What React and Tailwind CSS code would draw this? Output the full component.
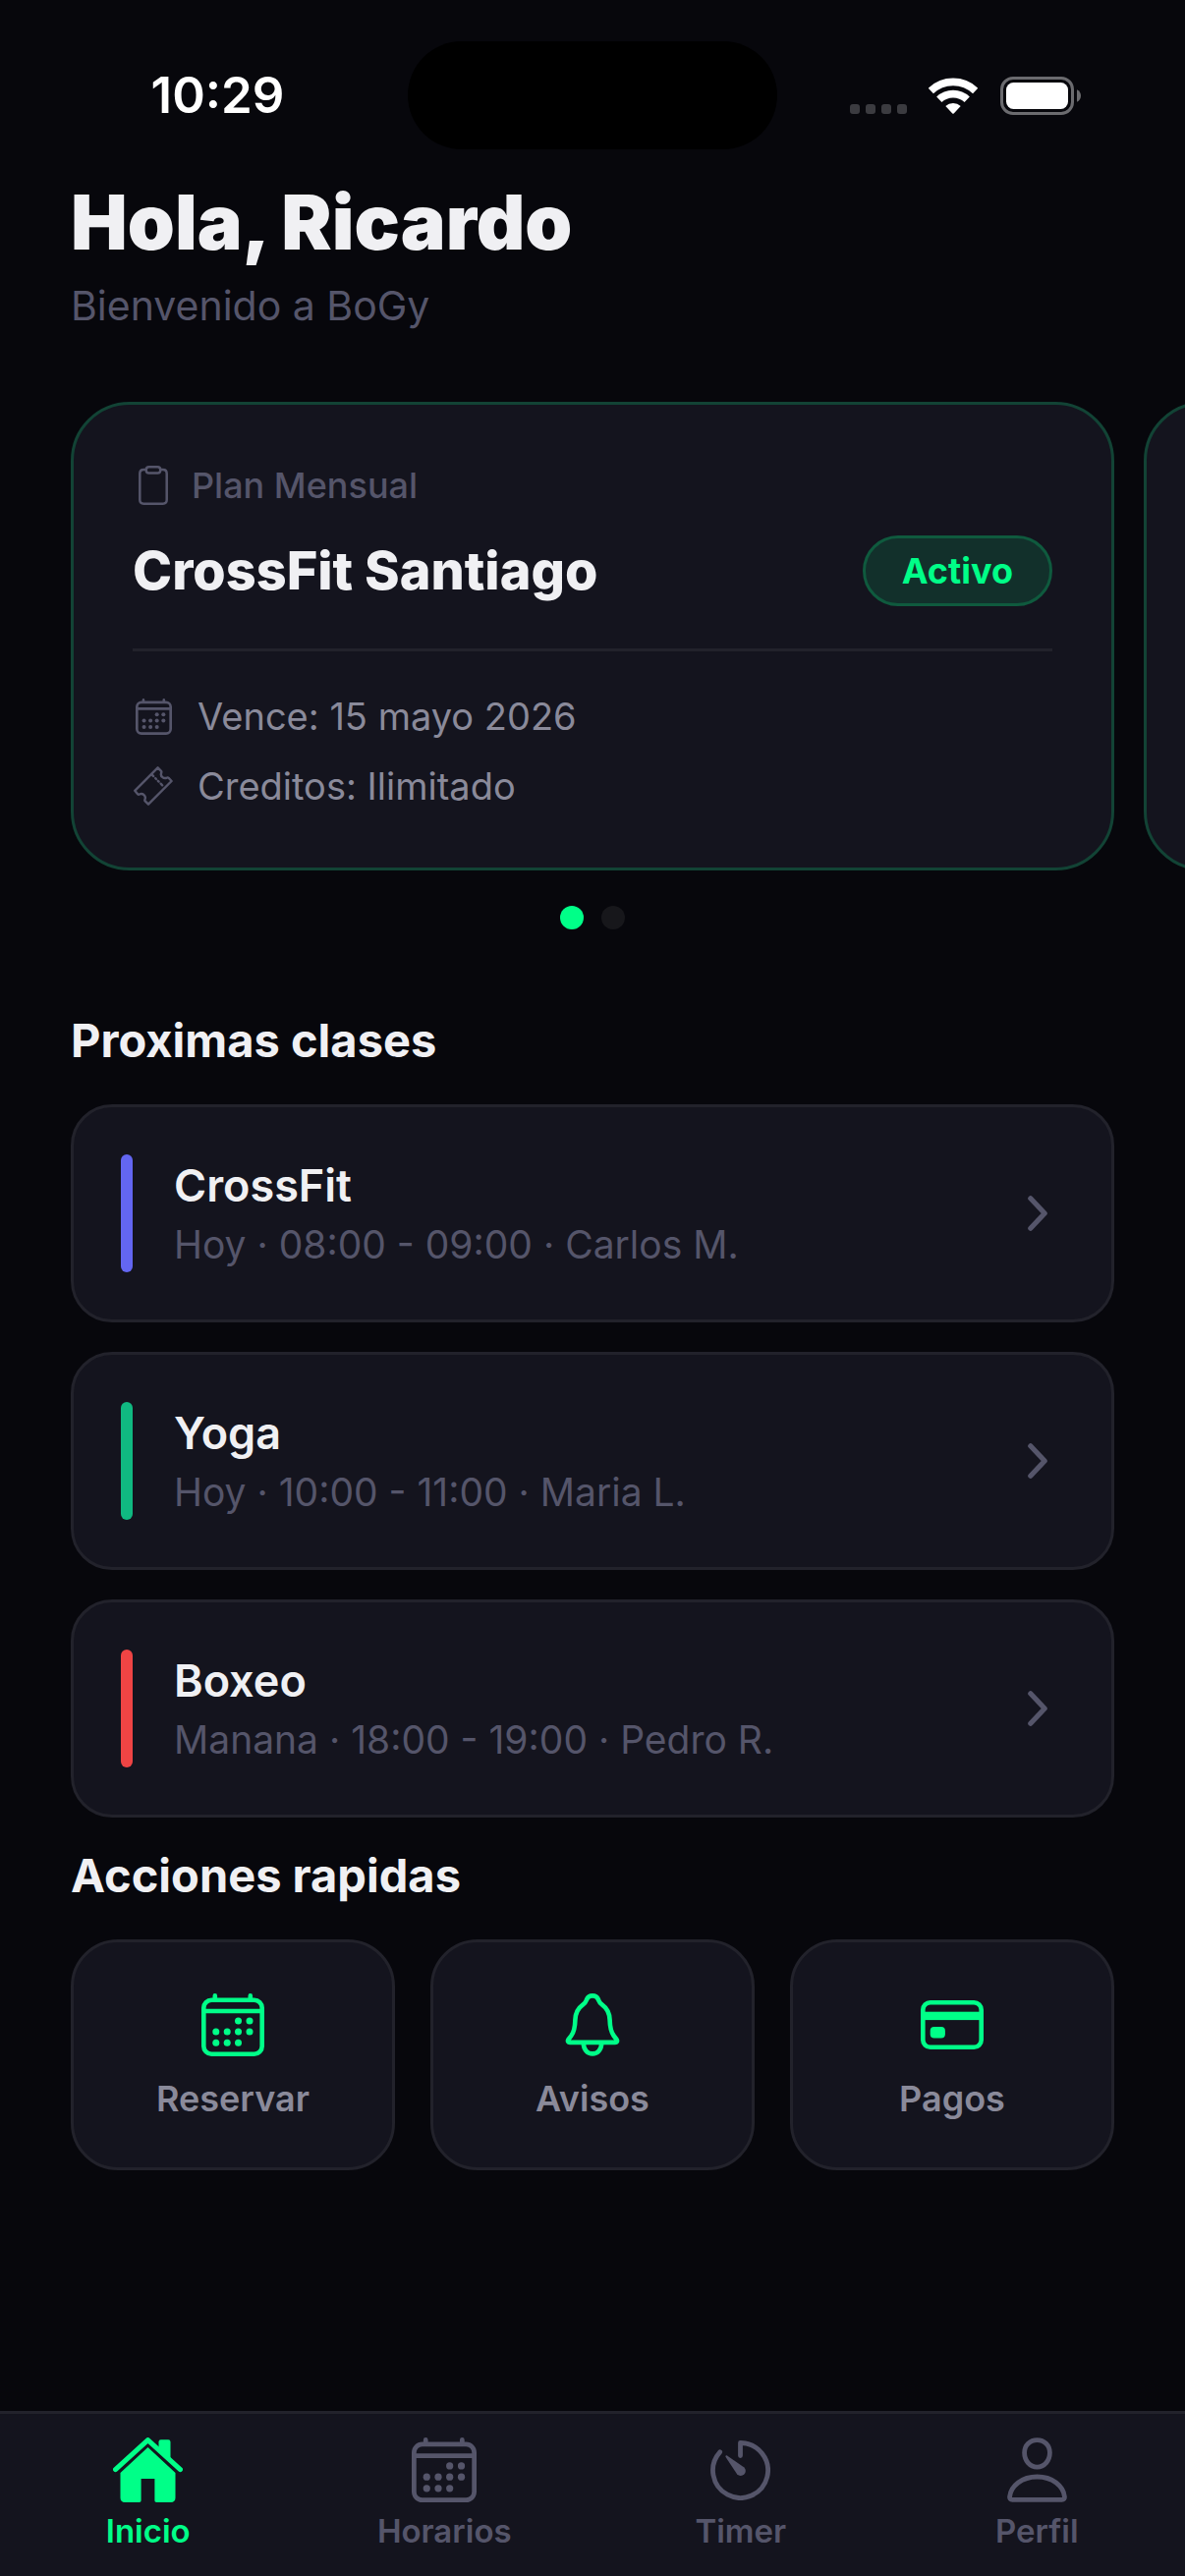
const CLASSES = [
  { name: 'CrossFit', detail: 'Hoy · 08:00 - 09:00 · Carlos M.', bar: 'bg-[#6366f1]' },
  { name: 'Yoga', detail: 'Hoy · 10:00 - 11:00 · Maria L.', bar: 'bg-[#10b981]' },
  { name: 'Boxeo', detail: 'Manana · 18:00 - 19:00 · Pedro R.', bar: 'bg-[#ef4444]' },
]

const ACTIONS = [
  { label: 'Reservar', Icon: CalendarIcon, size: 'size-16' },
  { label: 'Avisos', Icon: BellIcon, size: 'h-16 w-14' },
  { label: 'Pagos', Icon: CardIcon, size: 'h-[50px] w-16' },
]

const TABS = [
  { label: 'Inicio', Icon: HomeIcon, size: 'h-[66px] w-[71px]', active: true },
  { label: 'Horarios', Icon: CalendarIcon, size: 'size-[66px]' },
  { label: 'Timer', Icon: TimerIcon, size: 'size-[61px]' },
  { label: 'Perfil', Icon: PersonIcon, size: 'h-[66px] w-[61px]' },
]

function CalendarIcon({ className }) {
  return (
    <svg viewBox="0 0 64 64" fill="none" stroke="currentColor" strokeWidth="4.6" className={className} aria-hidden="true">
      <rect x="2.3" y="6.7" width="59.4" height="55" rx="8" />
      <path d="M2.3 18h59.4" />
      <path d="M13.8 2.4v4M49.8 2.4v4" strokeLinecap="round" />
      <g fill="currentColor" stroke="none">
        <circle cx="37.5" cy="28" r="3.5" />
        <circle cx="49" cy="28" r="3.5" />
        <circle cx="14.8" cy="39" r="3.5" />
        <circle cx="26.2" cy="39" r="3.5" />
        <circle cx="37.5" cy="39" r="3.5" />
        <circle cx="49" cy="39" r="3.5" />
        <circle cx="14.8" cy="50.2" r="3.5" />
        <circle cx="26.2" cy="50.2" r="3.5" />
        <circle cx="37.5" cy="50.2" r="3.5" />
      </g>
    </svg>
  )
}

function BellIcon({ className }) {
  return (
    <svg viewBox="0 0 56 64" fill="none" stroke="currentColor" strokeWidth="4.6" strokeLinejoin="round" className={className} aria-hidden="true">
      <path d="M28 2.4c-3.6 0-5.6 2.4-6.4 5-.6 2-1.8 3-3.8 4.4C12.4 15.6 10.6 20.6 10.4 27c-.2 8-.9 11.8-4 16l-3 4c-1 1.5-.2 2.9 1.6 2.9h46c1.8 0 2.6-1.4 1.6-2.9l-3-4c-3.1-4.2-3.8-8-4-16-.2-6.4-2-11.4-7.4-15.2-2-1.4-3.2-2.4-3.8-4.4-.8-2.6-2.8-5-6.4-5z" />
      <path d="M18.8 50.5c0 6.6 4 10.9 9.2 10.9s9.2-4.3 9.2-10.9" />
    </svg>
  )
}

function CardIcon({ className }) {
  return (
    <svg viewBox="0 0 64 50" fill="none" className={className} aria-hidden="true">
      <rect x="2.3" y="2.3" width="59.4" height="45.4" rx="7.5" stroke="currentColor" strokeWidth="4.6" />
      <rect x="2" y="11.7" width="60" height="8.4" fill="currentColor" />
      <rect x="9.7" y="27" width="15.2" height="11.5" rx="4" fill="currentColor" />
    </svg>
  )
}

function HomeIcon({ className }) {
  return (
    <svg viewBox="0 0 71 66" fill="currentColor" className={className} aria-hidden="true">
      <path d="M2.5 32.6 35.5 2.6l33 30" fill="none" stroke="currentColor" strokeWidth="5" strokeLinecap="round" strokeLinejoin="round" />
      <path d="M46.5 11.5v-7a2.2 2.2 0 0 1 2.2-2.2h7.6a2.2 2.2 0 0 1 2.2 2.2V23z" />
      <path d="M35.5 10 63.5 36v25.5c0 2.8-1.8 4.5-4.5 4.5H44.2a1.8 1.8 0 0 1-1.8-1.8V42H28.6v22.2a1.8 1.8 0 0 1-1.8 1.8H12c-2.7 0-4.5-1.7-4.5-4.5V36z" />
    </svg>
  )
}

function TimerIcon({ className }) {
  return (
    <svg viewBox="0 0 61 61" fill="none" className={className} aria-hidden="true">
      <path d="M30.5 15.5V2.5A28 28 0 1 1 9.7 11.8" stroke="currentColor" strokeWidth="4.8" strokeLinecap="round" strokeLinejoin="round" />
      <path d="M17 15.6 34.4 27.5a5 5 0 1 1-7.2 7L15.6 17c-.7-1.1.3-2.1 1.4-1.4z" fill="currentColor" />
    </svg>
  )
}

function PersonIcon({ className }) {
  return (
    <svg viewBox="0 0 61 66" fill="none" stroke="currentColor" strokeWidth="4.8" className={className} aria-hidden="true">
      <path d="M30.5 2.6c-7.4 0-12.9 5.5-12.9 12.9 0 8.2 5.6 14.6 12.9 14.6s12.9-6.4 12.9-14.6c0-7.4-5.5-12.9-12.9-12.9z" />
      <path d="M5.3 63.4h50.4c2 0 2.9-1.3 2.7-3.2C57.2 49.3 46 40 30.5 40S3.8 49.3 2.6 60.2c-.2 1.9.7 3.2 2.7 3.2z" />
    </svg>
  )
}

function ClipboardIcon({ className }) {
  return (
    <svg viewBox="0 0 30 40" fill="none" stroke="currentColor" strokeWidth="2.5" className={className} aria-hidden="true">
      <path d="M7.8 4H5.2C2.8 4 1.3 5.5 1.3 7.9v26.9c0 2.4 1.5 3.9 3.9 3.9h19.6c2.4 0 3.9-1.5 3.9-3.9V7.9c0-2.4-1.5-3.9-3.9-3.9h-2.6" />
      <rect x="7.8" y="1.3" width="14.4" height="6.3" rx="2.8" />
    </svg>
  )
}

function TicketIcon({ className }) {
  return (
    <svg viewBox="0 0 40 40" fill="none" stroke="currentColor" strokeWidth="2.4" strokeLinejoin="round" strokeLinecap="round" className={className} aria-hidden="true">
      <path d="M24.6 1.3 28 4.8c.5.5.4 1.1.2 1.7-.7 2-.2 3.7 1.2 4.6 1.3 1.1 2.8 1.3 4.5.5.6-.3 1.2-.3 1.7.2l3 3.2L15 38.7l-3.300-3.400c-.5-.5-.5-1-.2-1.7.7-1.7.3-3.3-1-4.5-1.3-1.2-3-1.4-4.7-.6-.6.3-1.2.2-1.7-.3L1.2 24.800z" />
      <path d="m18.8 8.7 1.4 1.4M22.2 12.2l.8.8M24.8 14.8l.8.8M27.6 17.7l1.6 1.6" />
    </svg>
  )
}

function ChevronIcon() {
  return (
    <svg viewBox="0 0 20 36" fill="none" className="mr-[65px] h-9 w-5 shrink-0 text-[#55556a]" aria-hidden="true">
      <path d="M2.8 2.8 17.2 18 2.8 33.2" stroke="currentColor" strokeWidth="5.2" strokeLinecap="round" strokeLinejoin="round" />
    </svg>
  )
}

function StatusBar() {
  return (
    <div className="grid grid-cols-[1fr_376px_1fr] items-center pt-[42px]">
      <span className="pl-7 text-center text-[51px] leading-[60px] font-semibold text-white">10:29</span>
      <div className="h-[110px] rounded-full bg-black" />
      <div className="flex items-center justify-end pr-[106px] text-white">
        <div className="mt-7 mr-[22px] flex gap-[6px]">
          {[0, 1, 2, 3].map((i) => (
            <span key={i} className="size-[10px] rounded-[3px] bg-[#3b3b40]" />
          ))}
        </div>
        <svg viewBox="0 0 50 37" fill="none" className="mr-[23px] h-[37px] w-[50px]" aria-label="Wi-Fi">
          <path d="M2.3 13.5a32.7 32.7 0 0 1 45.4 0" stroke="currentColor" strokeWidth="7.6" />
          <path d="M10.8 22.3a20.5 20.5 0 0 1 28.4 0" stroke="currentColor" strokeWidth="7.6" />
          <path d="M17.3 29a11.3 11.3 0 0 1 15.4 0L25.7 36.5a1 1 0 0 1-1.4 0z" fill="currentColor" />
        </svg>
        <svg viewBox="0 0 82 39" fill="none" className="h-[39px] w-[82px]" aria-label="Bateria">
          <rect x="1.5" y="1.5" width="72" height="36" rx="11.5" stroke="#6b6b6f" strokeWidth="3" />
          <rect x="6" y="6" width="63" height="27" rx="7.5" fill="currentColor" />
          <path d="M78 13.2c2.5 1.1 4 3.5 4 6.3s-1.5 5.2-4 6.3z" fill="#6b6b6f" />
        </svg>
      </div>
    </div>
  )
}

function PlanCard() {
  return (
    <article className="w-full shrink-0 rounded-[60px] border-[3px] border-[#124335] bg-[#14141e] px-[60px] pt-[60px] pb-[58px]">
      <div className="flex items-center gap-[18px] text-[#55556a]">
        <span className="flex w-[42px] justify-center">
          <ClipboardIcon className="h-10 w-[30px]" />
        </span>
        <span className="text-[36px] leading-[44px] font-medium">Plan Mensual</span>
      </div>
      <div className="mt-[29px] flex items-center justify-between">
        <h2 className="text-[54px] leading-[72px] font-extrabold">CrossFit Santiago</h2>
        <span className="rounded-full border-[3px] border-[#0f5a3e] bg-[#12302b] px-[37px] text-[36px] leading-[66px] font-bold text-[#00ff88]">
          Activo
        </span>
      </div>
      <hr className="mt-[43px] border-t-[3px] border-[#22222b]" />
      <div className="mt-[41px] flex flex-col gap-[21px] text-[38px] leading-[50px] text-[#8a8a9a]">
        <div className="flex items-center gap-6">
          <span className="flex w-[42px] justify-center text-[#55556a]">
            <CalendarIcon className="size-[37px]" />
          </span>
          <span>Vence: 15 mayo 2026</span>
        </div>
        <div className="flex items-center gap-6">
          <span className="flex w-[42px] justify-center text-[#55556a]">
            <TicketIcon className="size-10" />
          </span>
          <span>Creditos: Ilimitado</span>
        </div>
      </div>
    </article>
  )
}

function ClassRow({ item }) {
  return (
    <button className="flex w-full items-center rounded-[42px] border-[3px] border-[#22222b] bg-[#14141e] py-12 pl-12 text-left">
      <span className={`h-[120px] w-3 shrink-0 rounded-full ${item.bar}`} />
      <span className="ml-[42px] flex flex-1 flex-col gap-[10px]">
        <span className="text-[45px] leading-[54px] font-semibold">{item.name}</span>
        <span className="text-[39px] leading-[46px] text-[#55556a]">{item.detail}</span>
      </span>
      <ChevronIcon />
    </button>
  )
}

export default function App() {
  return (
    <div className="flex min-h-screen flex-col overflow-x-hidden bg-[#07070c] font-['Inter','Liberation_Sans',sans-serif] text-[#f0f0f3]">
      <StatusBar />

      <main className="flex-1 px-[72px] pb-12">
        <h1 className="mt-7 text-[77px] leading-[92px] font-black">Hola, Ricardo</h1>
        <p className="mt-[14px] text-[41px] leading-[50px] text-[#55556a]">Bienvenido a BoGy</p>

        <section className="mt-[73px]">
          <div className="flex gap-[30px]">
            <PlanCard />
            <div className="w-full shrink-0 rounded-[60px] border-[3px] border-[#124335] bg-[#14141e]" />
          </div>
          <div className="mt-9 flex justify-center gap-[18px]">
            <span className="size-6 rounded-full bg-[#00ff88]" />
            <span className="size-6 rounded-full bg-[#17171b]" />
          </div>
        </section>

        <section className="mt-[84px]">
          <h2 className="text-[47px] leading-[58px] font-bold">Proximas clases</h2>
          <div className="mt-9 flex flex-col gap-[30px]">
            {CLASSES.map((item) => (
              <ClassRow key={item.name} item={item} />
            ))}
          </div>
        </section>

        <section className="mt-[30px]">
          <h2 className="text-[47px] leading-[58px] font-bold">Acciones rapidas</h2>
          <div className="mt-9 grid grid-cols-3 gap-9">
            {ACTIONS.map(({ label, Icon, size }) => (
              <button
                key={label}
                className="flex flex-col items-center rounded-[48px] border-[3px] border-[#22222b] bg-[#14141e] pt-[52px] pb-12"
              >
                <span className="flex h-16 items-center text-[#00ff88]">
                  <Icon className={size} />
                </span>
                <span className="mt-[21px] text-[36px] leading-[44px] font-semibold text-[#8a8a9a]">{label}</span>
              </button>
            ))}
          </div>
        </section>
      </main>

      <nav className="grid grid-cols-4 border-t-[3px] border-[#22222b] bg-[#14141e] pt-6 pb-[26px]">
        {TABS.map(({ label, Icon, size, active }) => (
          <a
            key={label}
            href={`#${label.toLowerCase()}`}
            aria-current={active ? 'page' : undefined}
            className={`flex flex-col items-center ${active ? 'text-[#00ff88]' : 'text-[#55556a]'}`}
          >
            <span className="flex h-[66px] items-center">
              <Icon className={size} />
            </span>
            <span className="mt-[9px] text-[33px] leading-[40px] font-semibold">{label}</span>
          </a>
        ))}
      </nav>
    </div>
  )
}
